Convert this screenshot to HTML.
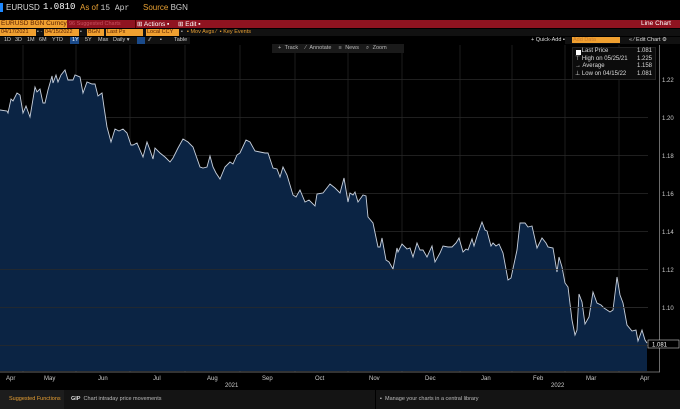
<!DOCTYPE html>
<html><head><meta charset="utf-8"><style>
*{margin:0;padding:0;box-sizing:border-box}
body{width:680px;height:409px;background:#000;overflow:hidden;font-family:"Liberation Sans",sans-serif;position:relative;color:#ddd}
.a{position:absolute;white-space:nowrap}
.s{font-size:5.5px}
.o{position:absolute;top:29px;height:7px;background:#f0a030;color:#5a2000;font-size:5.5px;line-height:7px;padding-left:1px;overflow:hidden;white-space:nowrap}
</style></head><body>
<div class="a" style="left:0;top:3px;width:3px;height:9px;background:#1e88ff"></div>
<div class="a" style="left:6px;top:3px;font-size:8px;color:#ddd">EURUSD</div>
<div class="a" style="left:43px;top:2px;font-size:9px;color:#fff;font-family:'Liberation Mono',monospace">1.0810</div>
<div class="a" style="left:80px;top:3px;font-size:8px;color:#e8a033">As of <span style="color:#ccc;font-family:'Liberation Mono',monospace">15 Apr</span></div>
<div class="a" style="left:143px;top:3px;font-size:8px;color:#e8a033">Source <span style="color:#ccc">BGN</span></div>

<div class="a" style="left:0;top:20px;width:680px;height:8px;background:#8f1320"></div>
<div class="a" style="left:0;top:20px;width:67px;height:8px;background:#f0a030"></div>
<div class="a s" style="left:1px;top:20px;color:#5a2000;font-size:6.5px">EURUSD BGN Curncy</div>
<div class="a s" style="left:69px;top:21px;color:#c85060">96 Suggested Charts</div>
<div class="a" style="left:135px;top:20px;width:1px;height:8px;background:#500"></div>
<div class="a" style="left:137px;top:20px;font-size:6.5px;color:#fff">⊞ Actions ▪</div>
<div class="a" style="left:178px;top:20px;font-size:6.5px;color:#fff">⊞ Edit ▪</div>
<div class="a" style="left:641px;top:20px;font-size:6.5px;color:#fff">Line Chart</div>

<div class="a" style="left:0;top:29px;width:680px;height:7px;background:#111"></div>
<div class="o" style="left:0;width:36px">04/17/2021</div>
<div class="a s" style="left:37px;top:29px;color:#aaa">▪ -</div>
<div class="o" style="left:44px;width:35px">04/15/2022</div>
<div class="a s" style="left:80px;top:29px;color:#aaa">▪</div>
<div class="o" style="left:87px;width:17px">BGN</div>
<div class="o" style="left:106px;width:37px">Last Px</div>
<div class="o" style="left:146px;width:33px">Local CCY</div>
<div class="a s" style="left:181px;top:29px;color:#aaa">▪</div>
<div class="a s" style="left:187px;top:29px;color:#e8a033">▪ Mov Avgs ⁄ &nbsp;▪ Key Events</div>

<div class="a" style="left:565px;top:37px;width:115px;height:7px;background:#111"></div>
<div class="a s" style="left:531px;top:37px;color:#ddd">+ Quick-Add ▪</div>
<div class="a" style="left:572px;top:37px;width:48px;height:6px;background:#f0a030"></div>
<div class="a s" style="left:573px;top:37px;color:#c8782a">Add Data</div>
<div class="a s" style="left:629px;top:37px;color:#ddd">« ⁄ Edit Chart ⚙</div>
<div class="a" style="left:0;top:37px;width:190px;height:7px;background:#111"></div>
<div class="a" style="left:70px;top:37px;width:9px;height:7px;background:#1a4a8a"></div>
<div class="a" style="left:137px;top:37px;width:8px;height:7px;background:#1a4a8a"></div>
<div class="a s" style="left:4px;top:37px;color:#ccc">1D</div>
<div class="a s" style="left:15px;top:37px;color:#ccc">3D</div>
<div class="a s" style="left:27px;top:37px;color:#ccc">1M</div>
<div class="a s" style="left:39px;top:37px;color:#ccc">6M</div>
<div class="a s" style="left:52px;top:37px;color:#ccc">YTD</div>
<div class="a s" style="left:72px;top:37px;color:#fff">1Y</div>
<div class="a s" style="left:85px;top:37px;color:#ccc">5Y</div>
<div class="a s" style="left:98px;top:37px;color:#ccc">Max</div>
<div class="a s" style="left:113px;top:37px;color:#ccc">Daily ▾</div>
<div class="a s" style="left:149px;top:37px;color:#ccc">⁄⁄</div>
<div class="a s" style="left:160px;top:37px;color:#ccc">▪</div>
<div class="a s" style="left:174px;top:37px;color:#ccc">Table</div>

<svg class="a" style="left:0;top:0" width="680" height="409">
<g stroke="#2a2a2a" stroke-width="0.7">
<line x1="0" y1="79.5" x2="648" y2="79.5"/><line x1="0" y1="117.5" x2="648" y2="117.5"/><line x1="0" y1="155.5" x2="648" y2="155.5"/><line x1="0" y1="193.5" x2="648" y2="193.5"/><line x1="0" y1="231.5" x2="648" y2="231.5"/><line x1="0" y1="269.5" x2="648" y2="269.5"/><line x1="0" y1="307.5" x2="648" y2="307.5"/><line x1="0" y1="345.5" x2="648" y2="345.5"/>
<line x1="23" y1="45" x2="23" y2="372"/><line x1="76" y1="45" x2="76" y2="372"/><line x1="130" y1="45" x2="130" y2="372"/><line x1="185" y1="45" x2="185" y2="372"/><line x1="240" y1="45" x2="240" y2="372"/><line x1="295" y1="45" x2="295" y2="372"/><line x1="348" y1="45" x2="348" y2="372"/><line x1="402" y1="45" x2="402" y2="372"/><line x1="460" y1="45" x2="460" y2="372"/><line x1="512" y1="45" x2="512" y2="372"/><line x1="565" y1="45" x2="565" y2="372"/><line x1="619" y1="45" x2="619" y2="372"/>
</g>
<polygon fill="#0b2444" points="0,371 0,110 7,111 8,113 11,99 13,101 17,93 20,95 23,113 26,106 30,117 35,87 37,92 40,89 43,103 45,103 48,90 52,76 53,83 56,75 58,82 61,75 65,70 68,80 73,80 75,75 80,77 83,93 87,82 92,84 95,84 98,96 102,93 104,107 107,127 111,142 115,129 119,131 123,129 127,133 131,145 133,145 137,143 143,157 147,142 150,150 153,159 155,148 160,153 165,157 170,162 173,158 178,148 183,139 188,142 193,147 200,167 203,168 207,167 210,156 213,167 216,173 220,179 225,167 230,162 233,164 237,155 240,153 246,140 250,142 255,151 260,152 265,153 268,153 273,168 277,169 280,177 283,167 287,175 293,195 296,197 300,190 305,202 309,200 315,206 317,194 323,193 330,184 335,188 340,193 344,178 348,202 350,193 353,195 355,192 358,202 363,195 366,196 368,217 373,223 378,247 380,247 382,238 386,260 389,262 393,269 397,248 398,252 402,244 407,249 410,248 413,257 417,243 420,250 423,250 427,257 432,246 435,262 440,253 443,246 448,247 452,247 456,243 459,238 463,252 466,249 468,250 472,239 474,246 478,233 482,222 485,230 487,231 491,246 493,243 496,246 499,244 503,253 508,280 511,278 517,250 520,223 525,223 528,227 532,226 537,248 542,238 546,243 548,247 553,248 557,272 559,257 562,267 565,283 568,287 572,320 575,335 577,330 579,294 582,302 585,324 589,317 593,292 597,303 601,305 604,308 610,312 613,310 617,277 620,295 623,303 627,325 632,331 636,330 638,341 642,330 645,340 647,343 647,371"/>
<polyline fill="none" stroke="#c8d0dc" stroke-width="0.9" points="0,110 7,111 8,113 11,99 13,101 17,93 20,95 23,113 26,106 30,117 35,87 37,92 40,89 43,103 45,103 48,90 52,76 53,83 56,75 58,82 61,75 65,70 68,80 73,80 75,75 80,77 83,93 87,82 92,84 95,84 98,96 102,93 104,107 107,127 111,142 115,129 119,131 123,129 127,133 131,145 133,145 137,143 143,157 147,142 150,150 153,159 155,148 160,153 165,157 170,162 173,158 178,148 183,139 188,142 193,147 200,167 203,168 207,167 210,156 213,167 216,173 220,179 225,167 230,162 233,164 237,155 240,153 246,140 250,142 255,151 260,152 265,153 268,153 273,168 277,169 280,177 283,167 287,175 293,195 296,197 300,190 305,202 309,200 315,206 317,194 323,193 330,184 335,188 340,193 344,178 348,202 350,193 353,195 355,192 358,202 363,195 366,196 368,217 373,223 378,247 380,247 382,238 386,260 389,262 393,269 397,248 398,252 402,244 407,249 410,248 413,257 417,243 420,250 423,250 427,257 432,246 435,262 440,253 443,246 448,247 452,247 456,243 459,238 463,252 466,249 468,250 472,239 474,246 478,233 482,222 485,230 487,231 491,246 493,243 496,246 499,244 503,253 508,280 511,278 517,250 520,223 525,223 528,227 532,226 537,248 542,238 546,243 548,247 553,248 557,272 559,257 562,267 565,283 568,287 572,320 575,335 577,330 579,294 582,302 585,324 589,317 593,292 597,303 601,305 604,308 610,312 613,310 617,277 620,295 623,303 627,325 632,331 636,330 638,341 642,330 645,340 647,343"/>
<g stroke="#2a2a2a" stroke-width="0.7"><line x1="0" y1="307.5" x2="648" y2="307.5"/><line x1="0" y1="345.5" x2="648" y2="345.5"/><line x1="0" y1="269.5" x2="648" y2="269.5"/></g>
<line x1="0" y1="372" x2="660" y2="372" stroke="#888" stroke-width="0.8"/>
<line x1="659.5" y1="45" x2="659.5" y2="372" stroke="#888" stroke-width="0.8"/>
<g fill="#ccc" font-size="6" font-family="Liberation Sans">
<text x="662" y="82">1.22</text><text x="662" y="120">1.20</text><text x="662" y="158">1.18</text><text x="662" y="196">1.16</text><text x="662" y="234">1.14</text><text x="662" y="272">1.12</text><text x="662" y="310">1.10</text>
<text x="6" y="380">Apr</text><text x="44" y="380">May</text><text x="98" y="380">Jun</text><text x="153" y="380">Jul</text><text x="207" y="380">Aug</text><text x="262" y="380">Sep</text><text x="315" y="380">Oct</text><text x="369" y="380">Nov</text><text x="425" y="380">Dec</text><text x="481" y="380">Jan</text><text x="533" y="380">Feb</text><text x="586" y="380">Mar</text><text x="640" y="380">Apr</text>
<text x="225" y="387">2021</text><text x="551" y="387">2022</text>
</g>
<rect x="648" y="340" width="31" height="8" fill="#000" stroke="#ccc" stroke-width="0.6"/>
<text x="652" y="346.5" fill="#fff" font-size="6" font-family="Liberation Sans">1.081</text>
</svg>

<div class="a" style="left:272px;top:44px;width:132px;height:9px;background:#1a1a1a"></div>
<div class="a s" style="left:278px;top:45px;color:#bbb;word-spacing:2px">+ Track &nbsp;⁄ Annotate &nbsp;≡ News &nbsp;⌕ Zoom</div>

<div class="a" style="left:572px;top:47px;width:84px;height:33px;background:#0c0c0c;border:1px solid #222"></div>
<div class="a" style="left:576px;top:50px;width:5px;height:5px;background:#fff"></div>
<div class="a s" style="left:575px;top:48px;color:#ddd;line-height:7.5px;font-size:6px">
&nbsp;&nbsp;&nbsp;&nbsp;Last Price<br>⊤ High on 05/25/21<br>→ Average<br>⊥ Low on 04/15/22</div>
<div class="a s" style="left:637px;top:48px;color:#ddd;line-height:7.5px;font-size:6px;text-align:right">1.081<br>1.225<br>1.158<br>1.081</div>

<div class="a" style="left:0;top:390px;width:680px;height:19px;background:#141414"></div>
<div class="a" style="left:0;top:390px;width:64px;height:19px;background:#1d1d1d"></div>
<div class="a" style="left:375px;top:390px;width:1px;height:19px;background:#000"></div>
<div class="a s" style="left:9px;top:396px;color:#e8a033">Suggested Functions</div>
<div class="a s" style="left:71px;top:396px;color:#bbb"><b style="color:#ddd">GIP</b> &nbsp;Chart intraday price movements</div>
<div class="a s" style="left:380px;top:396px;color:#bbb">▪ &nbsp;Manage your charts in a central library</div>
</body></html>
